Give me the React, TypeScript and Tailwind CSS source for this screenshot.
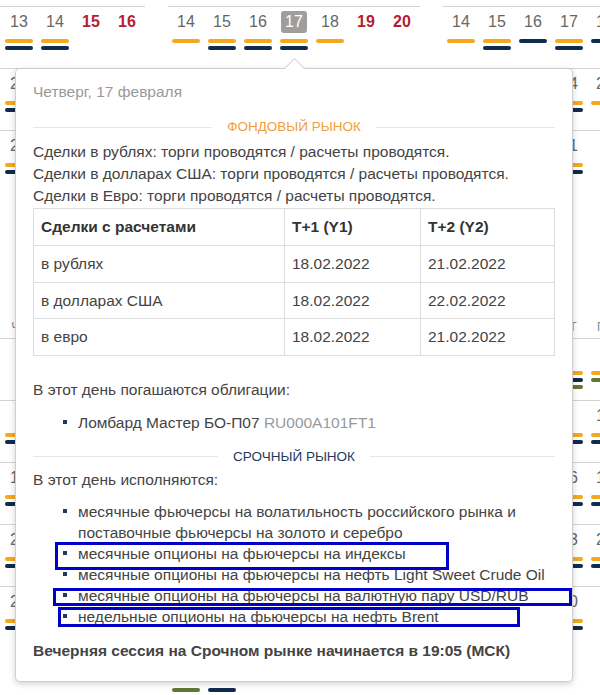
import React from 'react'

type Bar = 'o' | 'n' | 'g' | 'x'
type Day = { d: number; red?: boolean; sel?: boolean; bars?: Bar[] } | null

// x = empty slot, keeps the next bar on the second line
const barColor: Record<Bar, string> = {
  o: 'bg-[#f5a81c]',
  n: 'bg-[#0f2b4f]',
  g: 'bg-[#5f7934]',
  x: 'bg-transparent',
}

// helper to build a week: numbers, weekend days are red
function week(days: (number | null)[], bars: Record<number, Bar[]> = {}, sel?: number): Day[] {
  return days.map((d, i) =>
    d === null ? null : { d, red: i >= 5, sel: d === sel, bars: bars[d] ?? [] }
  )
}

const on: Bar[] = ['o', 'n']

const topMonths: Day[][][] = [
  // январь
  [
    week([10, 11, 12, 13, 14, 15, 16], { 10: on, 11: on, 12: on, 13: on, 14: on }),
    week([17, 18, 19, 20, 21, 22, 23], { 17: on, 18: on, 19: on, 20: on, 21: on }),
    week([24, 25, 26, 27, 28, 29, 30], { 24: on, 25: on, 26: on, 27: on, 28: on }),
  ],
  // февраль
  [
    week([14, 15, 16, 17, 18, 19, 20], { 14: ['o'], 15: on, 16: on, 17: on, 18: ['o'] }, 17),
    week([21, 22, 23, 24, 25, 26, 27], { 21: on, 22: on, 24: on, 25: ['o'] }),
    week([28, null, null, null, null, null, null], { 28: on }),
  ],
  // март
  [
    week([14, 15, 16, 17, 18, 19, 20], { 14: ['o'], 15: on, 16: ['n'], 17: on, 18: ['n'] }),
    week([21, 22, 23, 24, 25, 26, 27], { 21: on, 22: on, 23: on, 24: on, 25: ['o'] }),
    week([28, 29, 30, 31, null, null, null], { 28: on, 29: on, 30: on, 31: on }),
  ],
]

const bottomMonths: { title: string; weeks: Day[][] }[] = [
  {
    title: 'Апрель',
    weeks: [
      week([null, null, null, null, 1, 2, 3], { 1: on }),
      week([4, 5, 6, 7, 8, 9, 10], { 4: on, 5: on, 6: on, 7: on, 8: on }),
      week([11, 12, 13, 14, 15, 16, 17], { 11: on, 12: on, 13: on, 14: on, 15: on }),
      week([18, 19, 20, 21, 22, 23, 24], { 18: on, 19: on, 20: on, 21: on, 22: on }),
      week([25, 26, 27, 28, 29, 30, null], { 25: on, 26: on, 27: on, 28: on, 29: on }),
    ],
  },
  {
    title: 'Май',
    weeks: [
      week([null, null, null, null, null, null, 1]),
      week([2, 3, 4, 5, 6, 7, 8], { 4: on, 5: on, 6: on }),
      week([9, 10, 11, 12, 13, 14, 15], { 11: on, 12: on, 13: on }),
      week([16, 17, 18, 19, 20, 21, 22], { 16: on, 17: on, 18: on, 19: on, 20: on }),
      week([23, 24, 25, 26, 27, 28, 29], { 23: on, 24: on, 25: on, 26: on, 27: on }),
      week([30, 31, null, null, null, null, null], { 30: ['x', 'g'], 31: ['x', 'n'] }),
    ],
  },
  {
    title: 'Июнь',
    weeks: [
      week([null, null, 1, 2, 3, 4, 5], { 1: on, 2: ['o', 'n', 'g'], 3: ['o', 'g'] }),
      week([6, 7, 8, 9, 10, 11, 12], { 6: on, 7: on, 8: on, 9: on, 10: on }),
      week([13, 14, 15, 16, 17, 18, 19], { 14: on, 15: on, 16: on, 17: on }),
      week([20, 21, 22, 23, 24, 25, 26], { 20: on, 21: on, 22: on, 23: on, 24: on }),
      week([27, 28, 29, 30, null, null, null], { 27: on, 28: on, 29: on, 30: on }),
    ],
  },
]

const weekdays = ['ПН', 'ВТ', 'СР', 'ЧТ', 'ПТ', 'СБ', 'ВС']

function DayCell({ day }: { day: Day }) {
  return (
    <div className="w-[36px] flex flex-col items-center pt-[3px]">
      <div className="h-[24px] flex items-center justify-center">
        {day &&
          (day.sel ? (
            <span className="w-[26px] h-[22px] rounded-[3px] bg-[#9e9e9e] text-white text-[16px] flex items-center justify-center">
              {day.d}
            </span>
          ) : (
            <span className={`text-[16px] ${day.red ? 'text-[#b71c32] font-bold' : 'text-[#666]'}`}>{day.d}</span>
          ))}
      </div>
      <div className="mt-[5px] flex flex-col gap-[3px]">
        {day?.bars?.map((b, i) => (
          <div key={i} className={`w-[28px] h-[4px] rounded-full ${barColor[b]}`} />
        ))}
      </div>
    </div>
  )
}

function Weeks({ weeks }: { weeks: Day[][] }) {
  return (
    <>
      {weeks.map((w, i) => (
        <div key={i} className="flex h-[62px] border-t border-[#d4d4d4]">
          {w.map((d, j) => (
            <DayCell key={j} day={d} />
          ))}
        </div>
      ))}
    </>
  )
}

function Divider({ label, color }: { label: string; color: string }) {
  return (
    <div className="h-[16px] flex items-center">
      <div className="flex-1 h-px bg-[#e6e6e6]" />
      <span className={`px-[15px] text-[13.5px] leading-none ${color}`}>{label}</span>
      <div className="flex-1 h-px bg-[#e6e6e6]" />
    </div>
  )
}

function Bullet({ children, nowrap }: { children: React.ReactNode; nowrap?: boolean }) {
  return (
    <li className="flex">
      <span className="mt-[8px] ml-[30px] mr-[11px] w-[4px] h-[4px] shrink-0 bg-[#1e3a5f]" />
      <span className={nowrap ? 'whitespace-nowrap' : ''}>{children}</span>
    </li>
  )
}

const settlements = [
  ['в рублях', '18.02.2022', '21.02.2022'],
  ['в долларах США', '18.02.2022', '22.02.2022'],
  ['в евро', '18.02.2022', '21.02.2022'],
]

export default function App() {
  return (
    <div className="relative w-[600px] h-[695px] overflow-hidden bg-white font-['Liberation_Sans',Arial,sans-serif]">
      {/* Calendar */}
      <div className="pt-[6px] -ml-[107px]">
        <div className="flex gap-[23px]">
          {topMonths.map((m, i) => (
            <div key={i} className="w-[252px] shrink-0">
              <Weeks weeks={m} />
            </div>
          ))}
        </div>
        <div className="flex gap-[23px]">
          {bottomMonths.map((m) => (
            <div key={m.title} className="w-[252px] shrink-0">
              <div className="h-[124px] pt-[70px] text-[18px] text-[#333]">{m.title}</div>
              <div className="h-[22px] flex items-center">
                {weekdays.map((w) => (
                  <span key={w} className="w-[36px] text-center text-[12px] text-[#888]">{w}</span>
                ))}
              </div>
              <Weeks weeks={m.weeks} />
            </div>
          ))}
        </div>
      </div>

      {/* Day popup */}
      <div className="absolute left-[15px] top-[68px] w-[558px] bg-white border border-[#cfcfcf] rounded-[5px] shadow-[0_2px_6px_rgba(0,0,0,0.18)] px-[17px] pt-[13px] pb-[20px] text-[15.5px] text-[#444]">
        <div className="absolute left-[271px] -top-[8px] w-[15px] h-[15px] rotate-45 bg-white border-l border-t border-[#cfcfcf]" />

        <div className="leading-[20px] text-[#999]">Четверг, 17 февраля</div>

        <div className="mt-[17px]">
          <Divider label="ФОНДОВЫЙ РЫНОК" color="text-[#ef9f3c]" />
        </div>

        <div className="mt-[6px] leading-[22px]">
          <p>Сделки в рублях: торги проводятся / расчеты проводятся.</p>
          <p>Сделки в долларах США: торги проводятся / расчеты проводятся.</p>
          <p>Сделки в Евро: торги проводятся / расчеты проводятся.</p>
        </div>

        <table className="mt-px w-full border-collapse">
          <thead>
            <tr>
              <th className="w-[251px] h-[37px] border border-[#ddd] px-[7px] text-left font-bold text-[#333]">Сделки с расчетами</th>
              <th className="w-[136px] h-[37px] border border-[#ddd] px-[7px] text-left font-bold text-[#333]">T+1 (Y1)</th>
              <th className="h-[37px] border border-[#ddd] px-[7px] text-left font-bold text-[#333]">T+2 (Y2)</th>
            </tr>
          </thead>
          <tbody>
            {settlements.map((row) => (
              <tr key={row[0]}>
                {row.map((c, i) => (
                  <td key={i} className="h-[36.5px] border border-[#ddd] px-[7px]">{c}</td>
                ))}
              </tr>
            ))}
          </tbody>
        </table>

        <p className="mt-[23px] leading-[21px]">В этот день погашаются облигации:</p>
        <ul className="mt-[12px] leading-[21px]">
          <Bullet nowrap>
            Ломбард Мастер БО-П07 <span className="text-[#999]">RU000A101FT1</span>
          </Bullet>
        </ul>

        <div className="mt-[16px]">
          <Divider label="СРОЧНЫЙ РЫНОК" color="text-[#1e3a5f]" />
        </div>

        <p className="mt-[4px] leading-[21px]">В этот день исполняются:</p>
        <ul className="mt-[11px] leading-[21px]">
          <Bullet>месячные фьючерсы на волатильность российского рынка и поставочные фьючерсы на золото и серебро</Bullet>
          <Bullet nowrap>месячные опционы на фьючерсы на индексы</Bullet>
          <Bullet nowrap>месячные опционы на фьючерсы на нефть Light Sweet Crude Oil</Bullet>
          <Bullet nowrap>месячные опционы на фьючерсы на валютную пару USD/RUB</Bullet>
          <Bullet nowrap>недельные опционы на фьючерсы на нефть Brent</Bullet>
        </ul>

        <p className="mt-[13px] leading-[21px] font-bold">Вечерняя сессия на Срочном рынке начинается в 19:05 (МСК)</p>
      </div>

      {/* highlight frames */}
      <div className="absolute left-[55px] top-[542px] w-[394px] h-[28px] border-[3px] border-[#0000c8]" />
      <div className="absolute left-[53px] top-[588px] w-[519px] h-[18px] border-[3px] border-[#0000c8]" />
      <div className="absolute left-[58px] top-[607px] w-[462px] h-[20px] border-[3px] border-[#0000c8]" />
    </div>
  )
}
